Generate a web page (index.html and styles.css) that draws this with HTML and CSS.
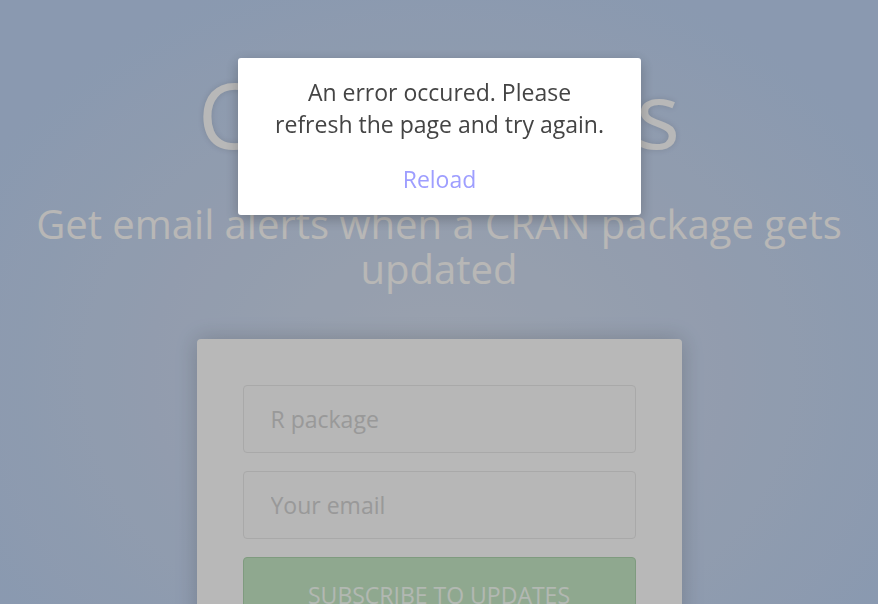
FILE: index.html
```html
<!DOCTYPE html>
<html lang="en">
<head>
<meta charset="utf-8">
<title>CRANalerts</title>
<link rel="stylesheet" href="styles.css">
</head>
<body>
<main class="page">
  <h1 class="title">CRANalerts</h1>
  <p class="subtitle">Get email alerts when a CRAN package gets updated</p>
  <form class="card">
    <input class="field" type="text" placeholder="R package">
    <input class="field" type="email" placeholder="Your email">
    <button class="submit" type="button">Subscribe to updates</button>
  </form>
</main>
<div class="backdrop">
  <div class="modal">
    <p class="modal-text">An error occured. Please<br>refresh the page and try again.</p>
    <a class="modal-link" href="#">Reload</a>
  </div>
</div>
</body>
</html>
```

FILE: styles.css
```css
html, body {
  margin: 0;
  height: 100%;
}
body {
  font-family: "Open Sans", "Liberation Sans", sans-serif;
  background: radial-gradient(ellipse 60% 70% at 50% 62%, #ced8e8 0%, #c3d1e9 55%, #b8cdeb 100%);
  overflow: hidden;
}
.page {
  display: flex;
  flex-direction: column;
  align-items: center;
  padding: 64px 16px 0;
  text-align: center;
}
.title {
  margin: 0;
  font-size: 92px;
  line-height: 100px;
  font-weight: 400;
  color: #f6f6f6;
  text-shadow: 0 0 6px rgba(0,0,0,0.12);
}
.subtitle {
  margin: 37px 0 0;
  font-size: 40px;
  line-height: 45px;
  font-weight: 400;
  color: #f6f5f3;
}
.card {
  margin-top: 48px;
  width: 485px;
  box-sizing: border-box;
  padding: 46px;
  background: #f6f6f6;
  border-radius: 4px;
  box-shadow: 0 0 22px rgba(0,0,0,0.18);
  display: flex;
  flex-direction: column;
  gap: 18px;
}
.field {
  height: 68px;
  box-sizing: border-box;
  border: 1px solid #e2e2e2;
  border-radius: 4px;
  background: #f4f4f4;
  padding: 0 27px;
  font-family: inherit;
  font-size: 23px;
  color: #555;
}
.field::placeholder {
  color: #cccccc;
}
.submit {
  height: 68px;
  border: 1px solid #aacfaa;
  border-radius: 4px;
  background: #bfe0bf;
  color: #eef6ee;
  font-family: inherit;
  font-size: 23px;
  text-transform: uppercase;
  padding: 22px 0 0;
  line-height: 30px;
  align-self: stretch;
  display: flex;
  justify-content: center;
  align-items: flex-start;
}
.backdrop {
  position: fixed;
  inset: 0;
  background: rgba(0,0,0,0.25);
}
.modal {
  position: absolute;
  top: 58px;
  left: 238px;
  width: 403px;
  box-sizing: border-box;
  padding: 18px 20px 20px;
  background: #fff;
  border-radius: 3px;
  box-shadow: 0 4px 14px rgba(0,0,0,0.25);
  text-align: center;
  display: flex;
  flex-direction: column;
  align-items: center;
  gap: 23px;
}
.modal-text {
  margin: 0;
  font-size: 23px;
  line-height: 32px;
  color: #444;
}
.modal-link {
  font-size: 23px;
  line-height: 32px;
  color: #9e9eff;
  text-decoration: none;
}
```
